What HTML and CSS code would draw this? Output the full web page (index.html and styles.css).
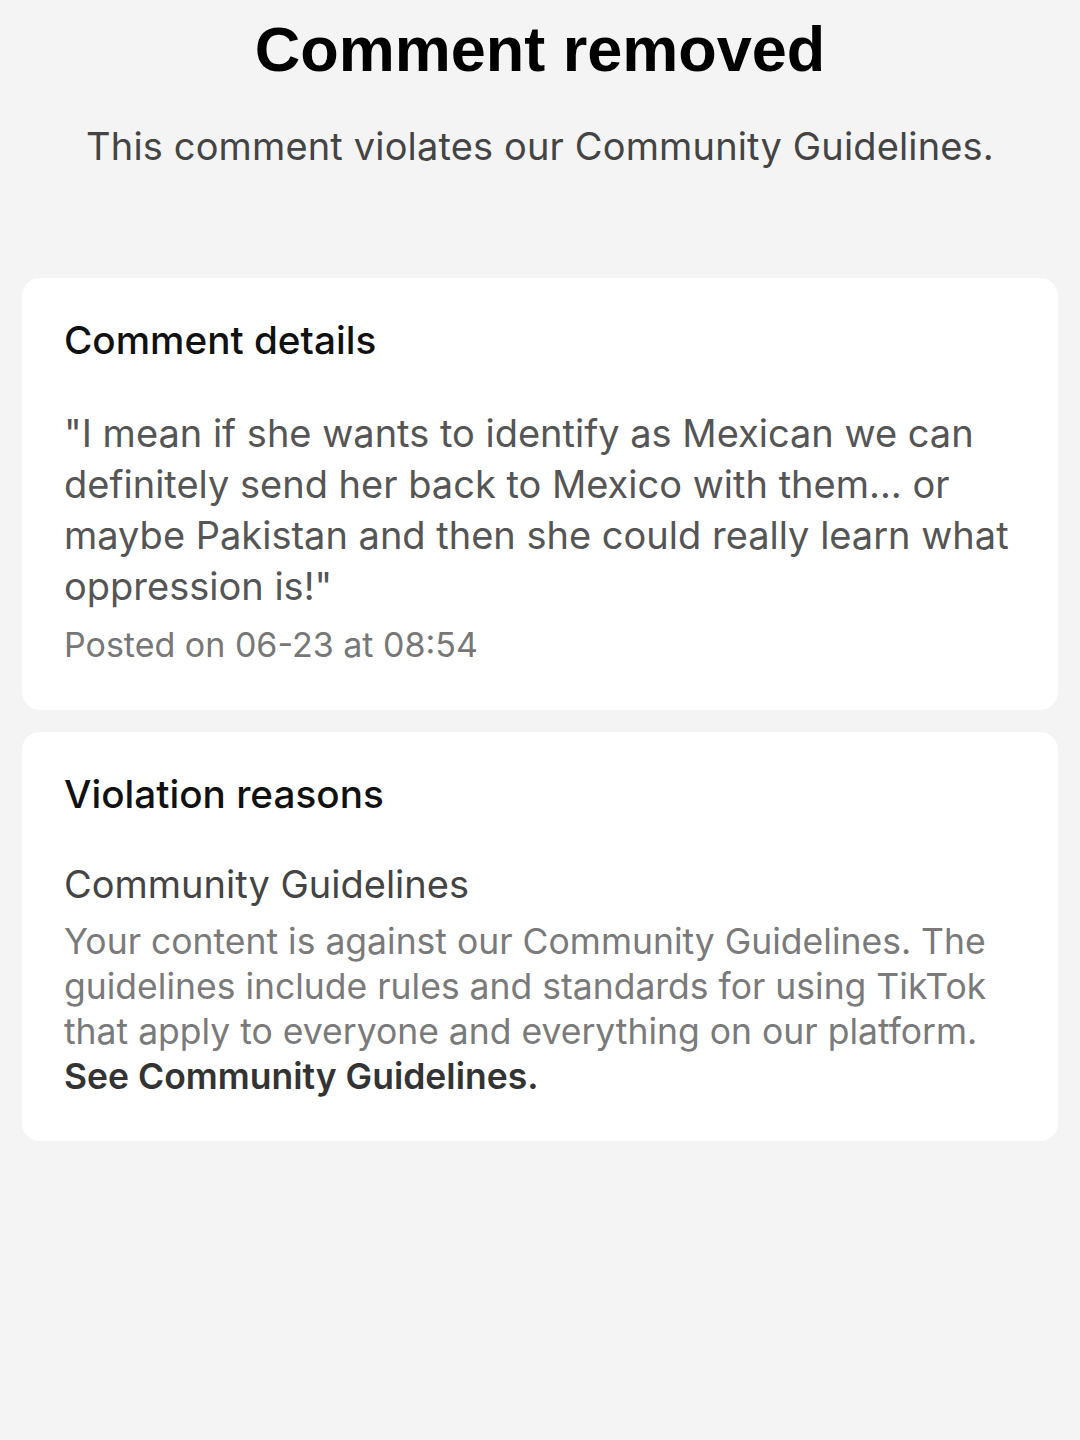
FILE: index.html
```html
<!DOCTYPE html>
<html lang="en">
<head>
	<meta charset="UTF-8">
	<title>Comment removed</title>
	<link rel="stylesheet" href="styles.css">
</head>
<body>
	<div class="page">
		<div class="header">
			<h1 class="title">Comment removed</h1>
			<p class="subtitle">This comment violates our Community Guidelines.</p>
		</div>

		<div class="card">
			<h2 class="card-title">Comment details</h2>
			<p class="comment">"I mean if she wants to identify as Mexican we can definitely send her back to Mexico with them... or maybe Pakistan and then she could really learn what oppression is!"</p>
			<p class="posted">Posted on 06-23 at 08:54</p>
		</div>

		<div class="card">
			<h2 class="card-title">Violation reasons</h2>
			<h3 class="reason-title">Community Guidelines</h3>
			<p class="reason-text">Your content is against our Community Guidelines. The guidelines include rules and standards for using TikTok that apply to everyone and everything on our platform.</p>
			<a class="reason-link" href="javascript:;">See Community Guidelines.</a>
		</div>
	</div>
</body>
</html>
```

FILE: styles.css
```css
*{margin:0;padding:0;box-sizing:border-box;}
html,body{background:#f4f4f4;}
body{font-family:Inter,"Liberation Sans",Arial,sans-serif;color:#111;}

.page{padding:0 22px;display:flex;flex-direction:column;gap:22px;}

.header{text-align:center;padding-top:18px;padding-bottom:108px;margin-bottom:-22px;}
.title{font-family:"Liberation Sans",Arial,sans-serif;font-weight:bold;font-size:63px;line-height:62px;color:#000;}
.subtitle{margin-top:42px;font-size:38px;line-height:48px;letter-spacing:0.15px;color:#444;}

.card{background:#fff;border-radius:18px;padding:38px 42px 43px;}
.card-title{font-size:38.7px;font-weight:500;line-height:48px;color:#111;}

.comment{margin-top:44px;font-size:38px;line-height:51px;color:#555;}
.posted{margin-top:11px;font-size:34px;line-height:44px;color:#777;}

.reason-title{margin-top:42px;font-size:38px;font-weight:400;line-height:48px;color:#444;}
.reason-text{margin-top:11px;font-size:35.5px;line-height:45px;color:#7a7a7a;}
.reason-link{display:block;font-size:35.5px;line-height:45px;color:#333;font-weight:600;text-decoration:none;}
.reason-link + *{margin-top:0;}
.card:last-child{padding-bottom:42px;}
```
